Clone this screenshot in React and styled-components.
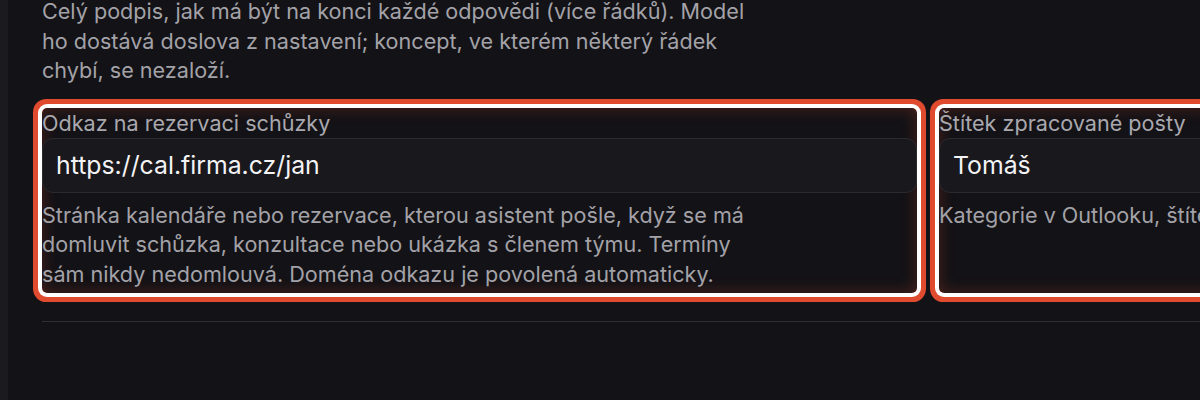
import React from 'react';
import styled, { createGlobalStyle } from 'styled-components';

const GlobalStyle = createGlobalStyle`
  html, body {
    margin: 0;
    padding: 0;
    background: #131216;
    overflow: hidden;
  }
  body {
    font-family: Inter, "Noto Sans", "Liberation Sans", sans-serif;
    -webkit-font-smoothing: antialiased;
  }
`;

const Shell = styled.div`
  display: flex;
  height: 400px;
  overflow: hidden;
  background: #131216;
`;

const SideRail = styled.div`
  flex: 0 0 8px;
  background: #1b1a1e;
`;

const Main = styled.main`
  flex: 1;
  min-width: 0;
  padding: 0 0 0 34px;
  margin-top: -3px;
`;

const Hint = styled.p`
  margin: 0;
  max-width: 720px;
  font-size: 21.6px;
  line-height: 29.5px;
  color: #a3a2a8;
`;

const FieldGrid = styled.div`
  display: grid;
  grid-template-columns: 875px 875px;
  column-gap: 22px;
  margin-top: 22px;
`;

const Field = styled.div`
  display: flex;
  flex-direction: column;
  padding-bottom: 4px;
  border-radius: 5px;
  ${(p) =>
    p.$highlighted &&
    `
    box-shadow:
      0 0 0 4px #ffffff,
      0 0 0 9px #e04a2e,
      inset 0 0 16px rgba(224, 74, 46, 0.28);
  `}
`;

const Label = styled.label`
  font-size: 21.6px;
  line-height: 30px;
  color: #a9a8ae;
`;

const Input = styled.input`
  box-sizing: border-box;
  width: 100%;
  height: 55px;
  padding: 0 13px;
  border: 1px solid #2b2a2f;
  border-radius: 11px;
  background: #19181c;
  color: #f3f3f5;
  font-family: inherit;
  font-size: 24.8px;
  outline: none;
`;

const HelpText = styled(Hint)`
  margin-top: 8px;
`;

const Divider = styled.hr`
  margin: 28px 0 0;
  border: 0;
  border-top: 1px solid #2f2e33;
`;

const fields = [
  {
    id: 'booking',
    label: 'Odkaz na rezervaci schůzky',
    value: 'https://cal.firma.cz/jan',
    help:
      'Stránka kalendáře nebo rezervace, kterou asistent pošle, když se má domluvit schůzka, konzultace nebo ukázka s členem týmu. Termíny sám nikdy nedomlouvá. Doména odkazu je povolená automaticky.',
  },
  {
    id: 'label',
    label: 'Štítek zpracované pošty',
    value: 'Tomáš',
    help: 'Kategorie v Outlooku, štítek v Gmailu.',
  },
];

export default function App() {
  return (
    <>
      <GlobalStyle />
      <Shell>
        <SideRail />
        <Main>
          <Hint>
            Celý podpis, jak má být na konci každé odpovědi (více řádků). Model
            ho dostává doslova z nastavení; koncept, ve kterém některý řádek
            chybí, se nezaloží.
          </Hint>
          <FieldGrid>
            {fields.map((f) => (
              <Field key={f.id} $highlighted>
                <Label htmlFor={f.id}>{f.label}</Label>
                <Input id={f.id} defaultValue={f.value} />
                <HelpText>{f.help}</HelpText>
              </Field>
            ))}
          </FieldGrid>
          <Divider />
        </Main>
      </Shell>
    </>
  );
}
